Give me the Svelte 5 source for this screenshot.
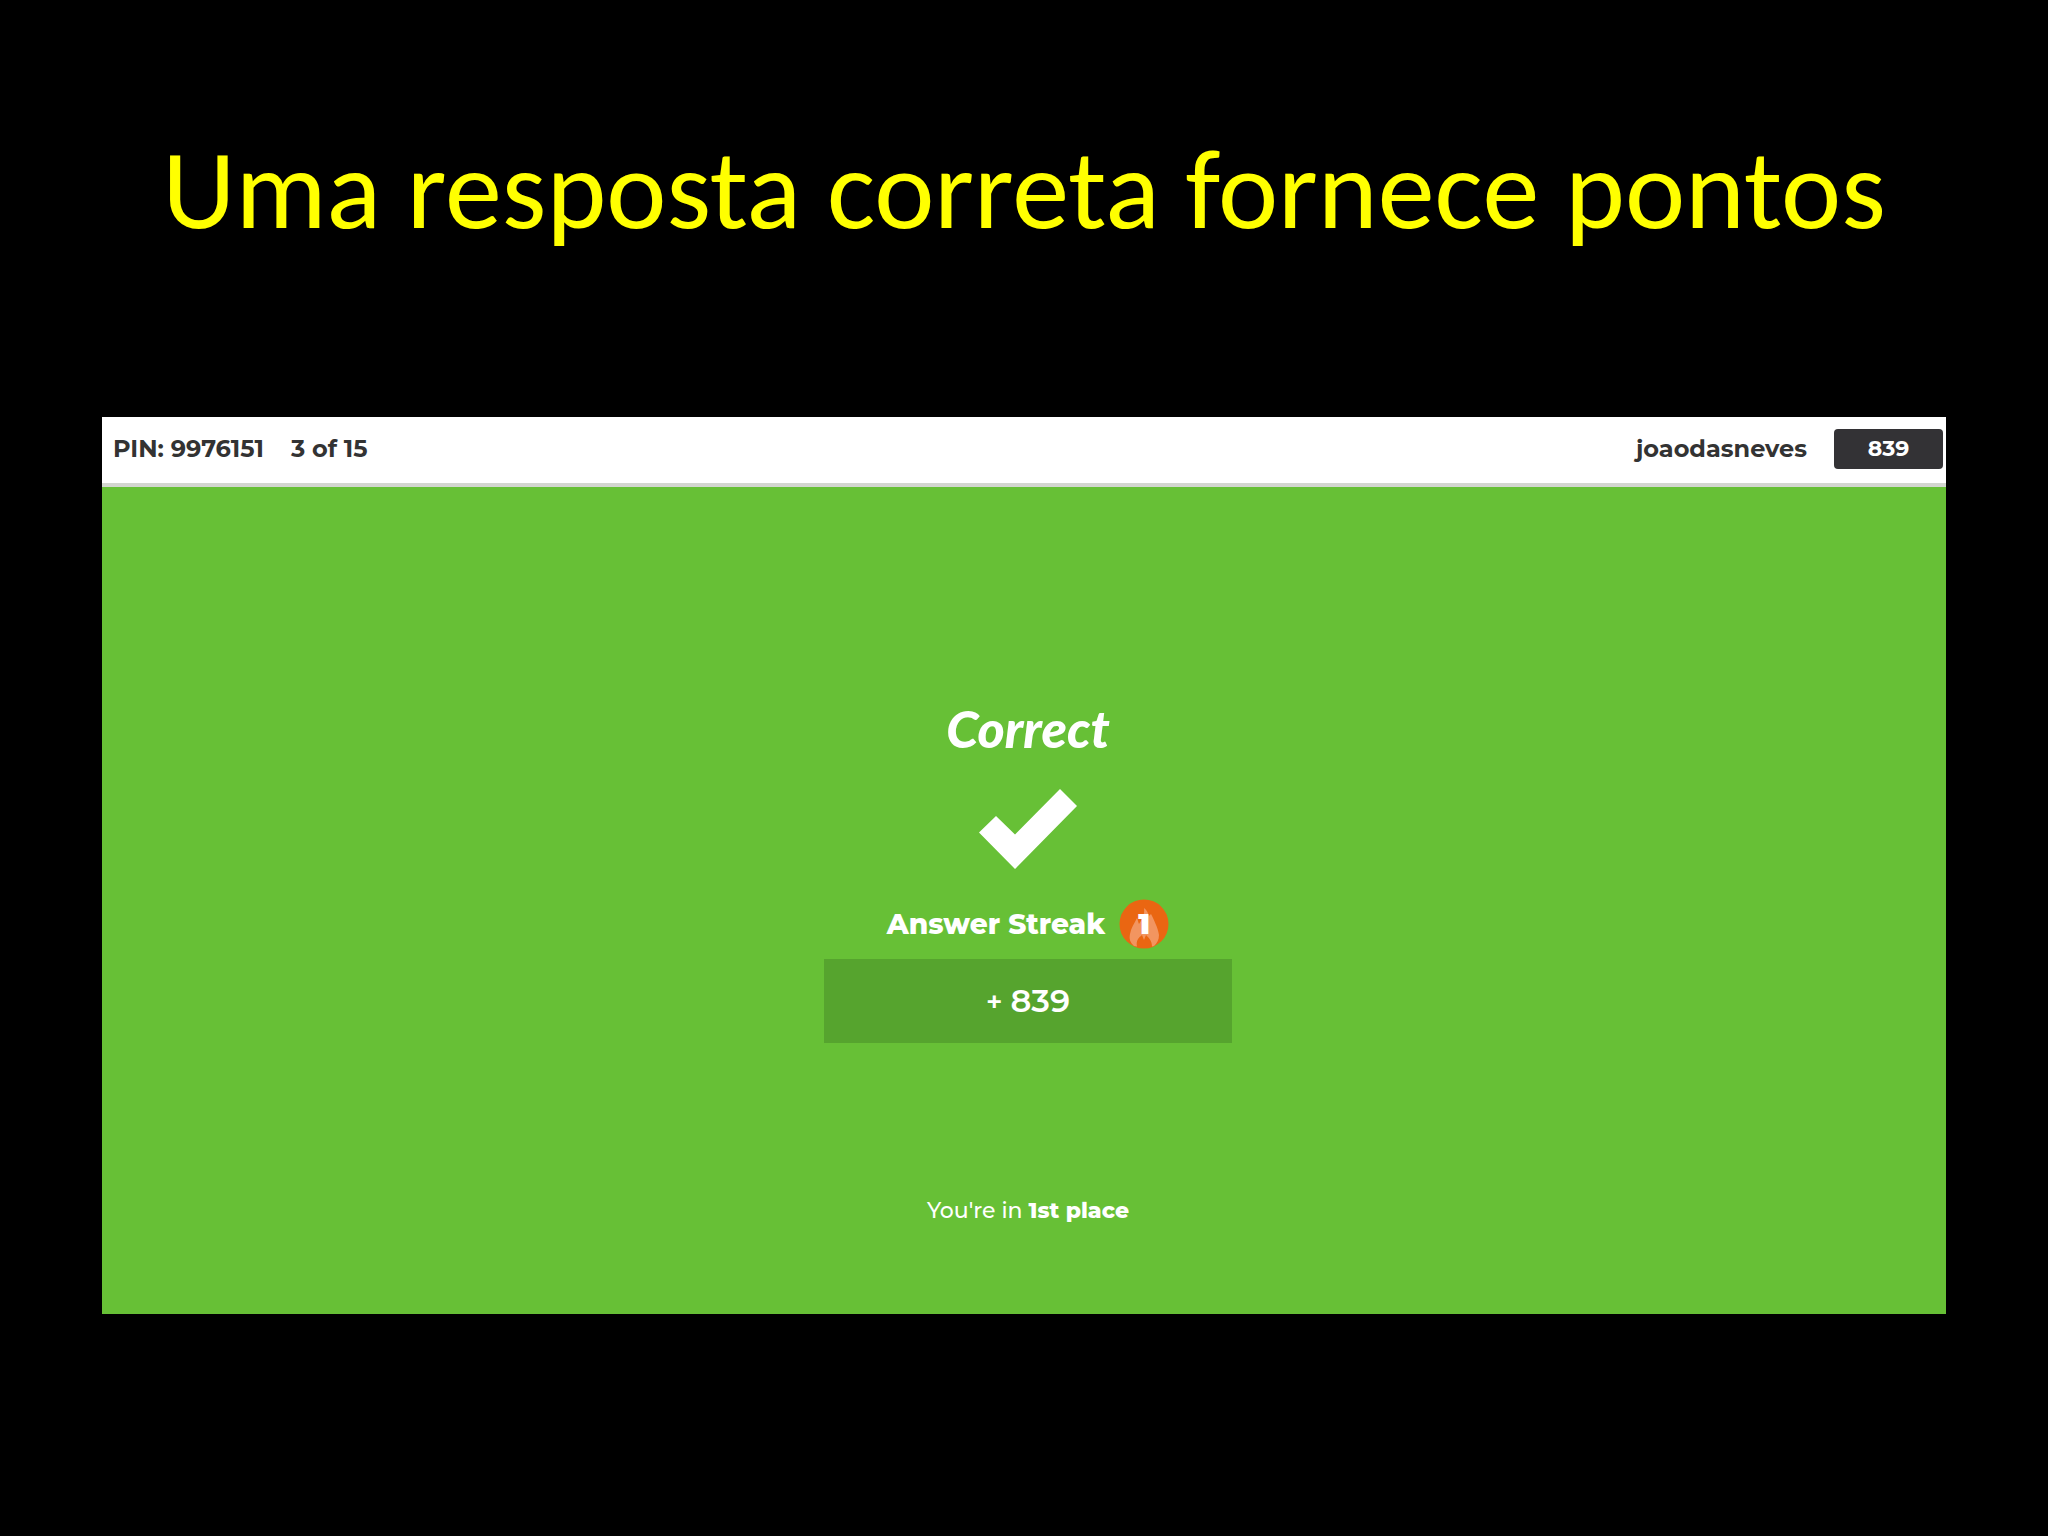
<script>
  const pin = '9976151';
  const question = 3;
  const total = 15;
  const player = 'joaodasneves';
  const score = 839;
  const streak = 1;
</script>

<main class="slide">
  <h1>Uma resposta correta fornece pontos</h1>

  <section class="game">
    <header>
      <span>PIN: {pin}</span>
      <span>{question} of {total}</span>
      <span class="player">{player}</span>
      <span class="score">{score}</span>
    </header>

    <div class="result">
      <h2>Correct</h2>
      <svg class="check" viewBox="0 0 98 80" aria-hidden="true">
        <path d="M0 43.500 17 27 36 45.500 81 0 98 17 36 80Z" fill="#fff" />
      </svg>
      <div class="streak">
        <span>Answer Streak</span>
        <span class="flame">
          <svg viewBox="0 0 50 50" aria-hidden="true">
            <circle cx="25" cy="25" r="24.500" fill="#ea6612" />
            <path
              d="M25 9C28 11 29 14 30 17L32 15C35 21 39 29 40 36C40 41 38 44 35 47L33 47.500C33 42 30 39 27 36L25 41L23 36C19 39 17 42 18 47.500L15 47C11 43 10 40 11 35C12 29 15 25 18 19C19 21 19 23 20 25C23 20 26 16 25 9Z"
              fill="#f29560"
            />
          </svg>
          <b>{streak}</b>
        </span>
      </div>
      <div class="points"><span class="plus">+</span><span>{score}</span></div>
      <p>You're in <strong>1st place</strong></p>
    </div>
  </section>
</main>

<style>
  :global(body) {
    margin: 0;
    background: #000;
  }
  .slide {
    box-sizing: border-box;
    min-height: 100vh;
    padding: 125px 102px 222px;
    background: #000;
    font-family: Montserrat, Inter, 'Liberation Sans', sans-serif;
  }
  h1 {
    margin: 0 0 164px;
    color: #ff0;
    font: 400 114px/128px Carlito, Lato, sans-serif;
    text-align: center;
  }
  .game {
    background: #67c036;
    color: #fff;
  }
  header {
    display: flex;
    align-items: center;
    gap: 27px;
    padding: 12px 3px 14px 11px;
    border-bottom: 4px solid #d3d6d0;
    background: #fff;
    color: #333;
    font-size: 24px;
    font-weight: 700;
    line-height: 40px;
  }
  .player {
    margin-left: auto;
  }
  .score {
    width: 109px;
    border-radius: 4px;
    background: #333235;
    color: #fff;
    font-size: 22px;
    text-align: center;
  }
  .result {
    display: flex;
    flex-direction: column;
    align-items: center;
    padding: 211px 0 87px 8px;
  }
  h2 {
    margin: 0;
    font: italic 900 52px/60px Lato, sans-serif;
  }
  .check {
    width: 98px;
    height: 80px;
    margin: 31px 0 30px;
  }
  .streak {
    display: flex;
    align-items: center;
    gap: 14px;
    font-size: 28px;
    font-weight: 800;
    line-height: 50px;
  }
  .flame {
    display: grid;
    width: 50px;
    height: 50px;
    place-items: center;
  }
  .flame > * {
    grid-area: 1 / 1;
  }
  .points {
    display: flex;
    align-items: center;
    justify-content: center;
    gap: 8px;
    width: 408px;
    margin-top: 10px;
    background: #56a42e;
    font-size: 32px;
    font-weight: 600;
    line-height: 84px;
  }
  .plus {
    font-size: 28px;
  }
  p {
    margin: 152px 0 0;
    font-size: 22px;
    font-weight: 500;
    line-height: 32px;
  }
  strong {
    font-weight: 800;
  }
</style>
